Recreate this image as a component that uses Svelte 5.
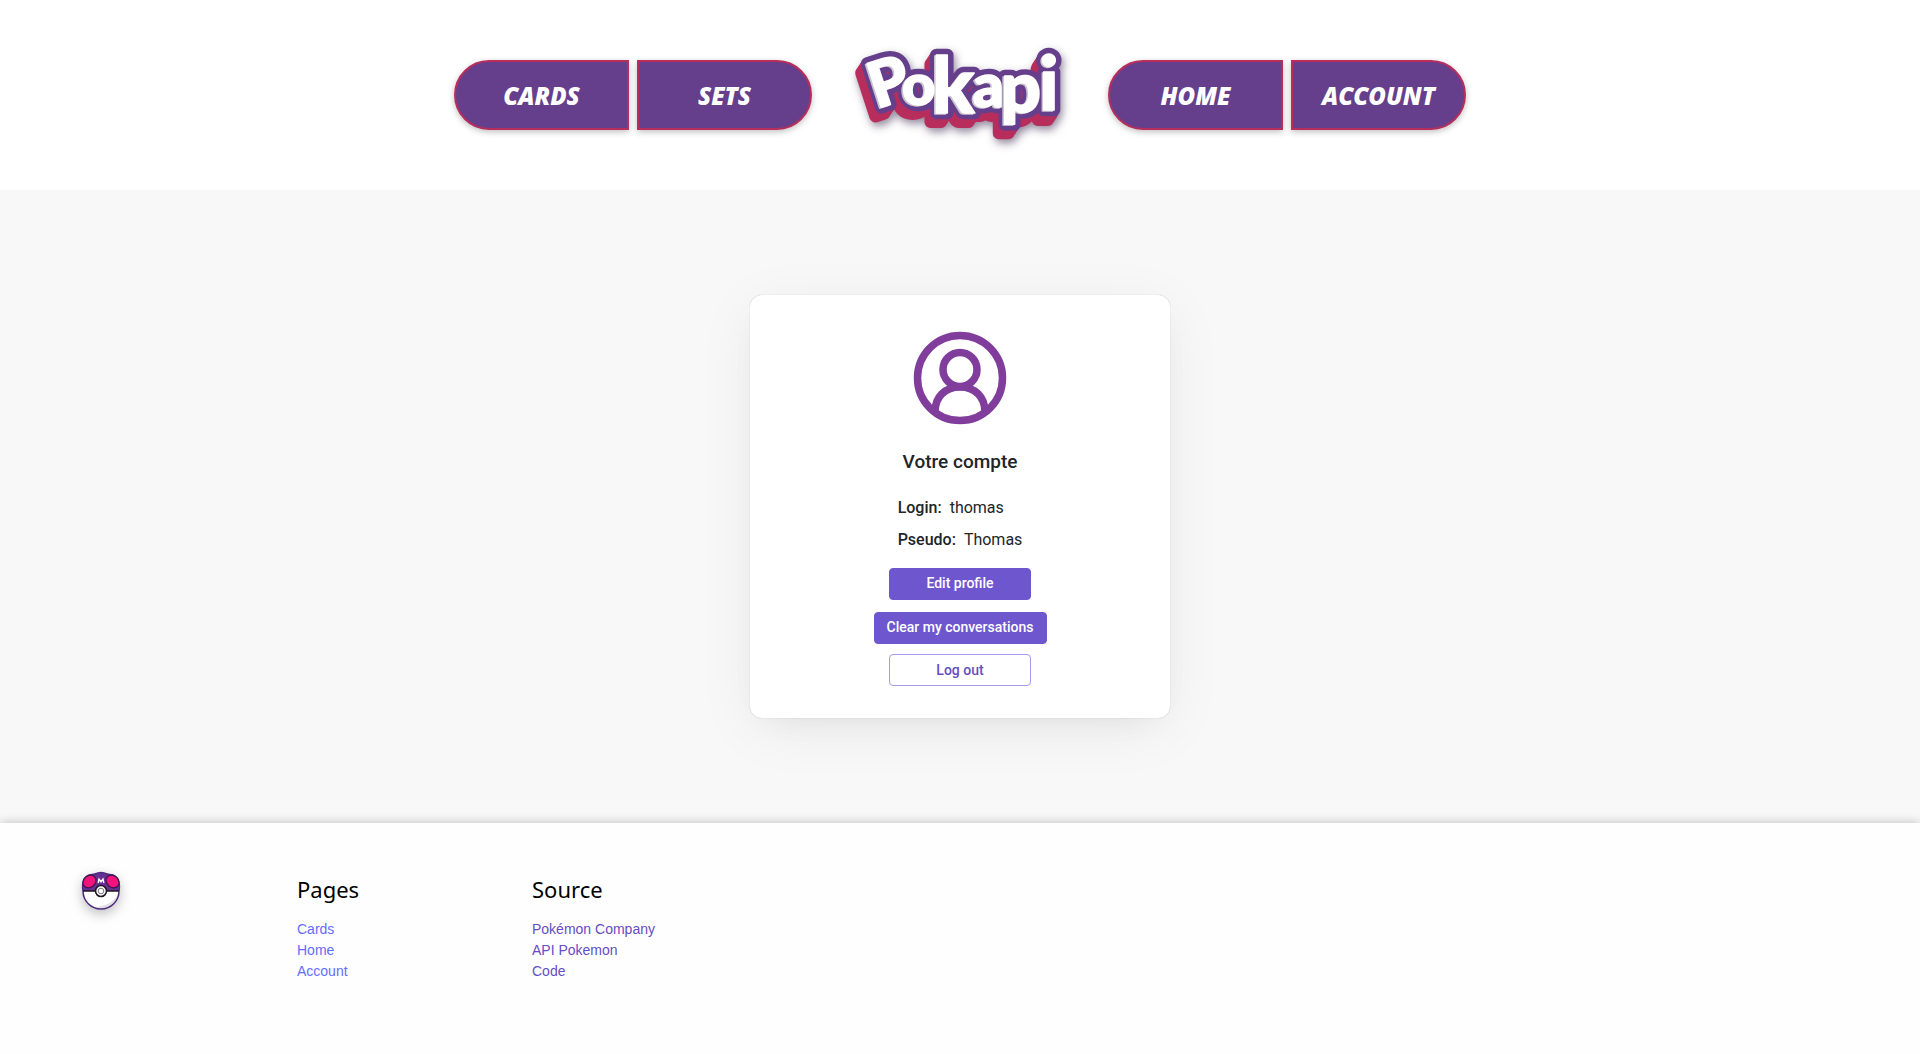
<script>
  const leftNav = ['Cards', 'Sets'];
  const rightNav = ['Home', 'Account'];
  const profile = [
    { label: 'Login', value: 'thomas' },
    { label: 'Pseudo', value: 'Thomas' }
  ];
  const columns = [
    { title: 'Pages', kind: 'internal', links: ['Cards', 'Home', 'Account'] },
    { title: 'Source', kind: 'external', links: ['Pokémon Company', 'API Pokemon', 'Code'] }
  ];
</script>

<header>
  <nav class="group" aria-label="Collection">
    {#each leftNav as item}
      <a class="pill" href="#{item.toLowerCase()}">{item}</a>
    {/each}
  </nav>
  <a class="brand" href="#home" aria-label="Pokapi">
    <svg viewBox="0 0 720 390" width="240" height="130">
      <defs>
        <text id="wordmark" class="wordmark">
          <tspan x="110" y="236" rotate="-18" font-size="190">P</tspan><tspan x="186" y="225" font-size="174">o</tspan><tspan x="276" y="248" font-size="234">k</tspan><tspan x="398" y="230" font-size="184">a</tspan><tspan x="482" y="246" font-size="212">p</tspan><tspan x="598" y="241" font-size="222">i</tspan>
        </text>
      </defs>
      <g class="depth">
        <use href="#wordmark" x="-18" y="28" />
        <use href="#wordmark" x="-12" y="19" />
        <use href="#wordmark" x="-6" y="10" />
      </g>
      <use class="outline" href="#wordmark" />
      <use class="shade" href="#wordmark" x="-5" y="3" />
      <use class="face" href="#wordmark" />
    </svg>
  </a>
  <nav class="group" aria-label="Site">
    {#each rightNav as item}
      <a class="pill" href="#{item.toLowerCase()}">{item}</a>
    {/each}
  </nav>
</header>

<main>
  <section class="card">
    <svg class="avatar" viewBox="0 0 94 94" width="94" height="94" aria-hidden="true">
      <circle cx="47" cy="47" r="42.5" />
      <circle cx="47" cy="38.5" r="17" />
      <path d="M22.200 80C22.200 66 32 56 47 56S71.800 66 71.800 80" />
    </svg>
    <h1>Votre compte</h1>
    <dl>
      {#each profile as row}
        <div class="row"><dt>{row.label}:</dt><dd>{row.value}</dd></div>
      {/each}
    </dl>
    <div class="actions">
      <button class="solid">Edit profile</button>
      <button class="solid">Clear my conversations</button>
      <button class="ghost">Log out</button>
    </div>
  </section>
</main>

<footer>
  <div class="col">
    <svg class="ball" viewBox="0 0 40 40" width="40" height="40" aria-hidden="true">
      <circle cx="20" cy="20" r="18" fill="#fff" />
      <path d="M37 24A17.500 17.500 0 0 1 12 36C24 36 32 31 37 24Z" fill="#e2e2e4" />
      <path d="M2 20C1 14 2 8 6 5C9 3 12 4 14 3Q20 0 26 3C28 4 31 3 34 5C38 8 39 14 38 20Z" fill="#65308f" />
      <path d="M2 20C1 14 2 8 6 5C9 3 12 4 14 3Q20 0 26 3C28 4 31 3 34 5C38 8 39 14 38 20A18 18 0 0 1 2 20Z" fill="none" stroke="#4e2a80" stroke-width="1.500" />
      <ellipse cx="8.500" cy="10.500" rx="7" ry="5.800" transform="rotate(-40 8.500 10.500)" fill="#f0147c" stroke="#40164f" stroke-width="1.200" />
      <ellipse cx="31.500" cy="10.500" rx="7" ry="5.800" transform="rotate(40 31.500 10.500)" fill="#f0147c" stroke="#40164f" stroke-width="1.200" />
      <path d="M17.200 12L18 8.200L20 10.800L22 8.200L22.800 12" fill="none" stroke="#fff" stroke-width="1.400" />
      <path d="M2 20H38" stroke="#1c1722" stroke-width="1.600" />
      <circle cx="20" cy="20" r="5.500" fill="#fff" stroke="#1c1722" stroke-width="1.600" />
      <circle cx="20" cy="20" r="2.800" fill="#fff" stroke="#77747c" stroke-width="1" />
    </svg>
  </div>
  {#each columns as column}
    <div class="col">
      <h2>{column.title}</h2>
      <ul class={column.kind}>
        {#each column.links as link}
          <li><a href="#{link.toLowerCase().replaceAll(' ', '-')}">{link}</a></li>
        {/each}
      </ul>
    </div>
  {/each}
</footer>

<style>
  :global(body) {
    margin: 0;
    background: #fefefe;
  }
  :global(#app) {
    min-height: 100vh;
    display: flex;
    flex-direction: column;
  }
  a {
    text-decoration: none;
  }
  header {
    display: flex;
    justify-content: center;
    align-items: center;
    gap: 28px;
    padding: 30px 0;
    background: #fff;
  }
  .group {
    display: flex;
    gap: 8px;
  }
  .pill {
    box-sizing: border-box;
    width: 175px;
    height: 70px;
    display: flex;
    align-items: center;
    justify-content: center;
    border: 2px solid #b72d5c;
    background: #663f8c;
    color: #fff;
    font: italic 800 24px "Open Sans", sans-serif;
    text-transform: uppercase;
    box-shadow: 0 2px 6px rgba(0, 0, 0, 0.25);
  }
  .pill:first-child {
    border-radius: 35px 0 0 35px;
  }
  .pill:last-child {
    border-radius: 0 35px 35px 0;
  }
  .brand svg {
    display: block;
    filter: drop-shadow(2px 4px 4px rgba(40, 20, 60, 0.5));
  }
  .wordmark {
    font-family: Lato, sans-serif;
    font-weight: 900;
    stroke-linejoin: round;
  }
  .depth {
    fill: #b72d5c;
    stroke: #b72d5c;
    stroke-width: 36px;
  }
  .outline {
    fill: #663f8c;
    stroke: #663f8c;
    stroke-width: 38px;
  }
  .shade {
    fill: #c9c5ce;
    stroke: #c9c5ce;
    stroke-width: 4px;
  }
  .face {
    fill: #fff;
    stroke: #fff;
    stroke-width: 5px;
  }
  main {
    display: flex;
    justify-content: center;
    padding: 105px 0;
    background: #f8f8f8;
    font-family: Roboto, sans-serif;
    color: #212529;
  }
  .card {
    box-sizing: border-box;
    width: 420px;
    display: flex;
    flex-direction: column;
    align-items: center;
    padding: 36px 32px 32px;
    border-radius: 12px;
    background: #fff;
    box-shadow: 0 0 1px rgba(0, 0, 0, 0.3), 0 12px 60px rgba(0, 0, 0, 0.06), 0 12px 32px -16px rgba(0, 0, 0, 0.08);
  }
  .avatar {
    fill: none;
    stroke: #803d9c;
    stroke-width: 7.5px;
  }
  h1 {
    margin: 23px 0 16px;
    font-size: 19px;
    line-height: 28px;
    font-weight: 500;
  }
  dl {
    margin: 0;
    font-size: 16px;
    line-height: 24px;
  }
  .row {
    display: flex;
    gap: 8px;
    padding: 4px 0;
  }
  dt {
    font-weight: 500;
  }
  dd {
    margin: 0;
  }
  .actions {
    display: flex;
    flex-direction: column;
    align-items: center;
    margin-top: 12px;
  }
  button {
    box-sizing: border-box;
    height: 32px;
    min-width: 142px;
    padding: 0 12px;
    border: 1px solid #6e56cf;
    border-radius: 4px;
    font: 500 14px/20px Roboto, sans-serif;
    cursor: pointer;
  }
  .solid {
    margin-bottom: 12px;
    padding-bottom: 2px;
    background: #6e56cf;
    color: #fff;
  }
  .ghost {
    margin-top: -2px;
    border-color: #aa99ec;
    background: #fff;
    color: #654dc4;
  }
  footer {
    position: relative;
    flex: 1;
    display: flex;
    padding: 48px 62px 60px;
    background: #fefefe;
    box-shadow: 0 0 10px rgba(0, 0, 0, 0.24);
  }
  .col {
    width: 235px;
  }
  .ball {
    display: block;
    margin-left: 19px;
    filter: drop-shadow(0 4px 6px rgba(0, 0, 0, 0.25));
  }
  h2 {
    margin: 1px 0 13px;
    color: #000;
    font: 400 22px/34px "Noto Sans", sans-serif;
  }
  ul {
    margin: 0;
    padding: 0;
    list-style: none;
    font: 14px/21px "Liberation Sans", Arial, sans-serif;
  }
  .internal a {
    color: #646cff;
  }
  .external a {
    color: #654dc4;
  }
</style>
